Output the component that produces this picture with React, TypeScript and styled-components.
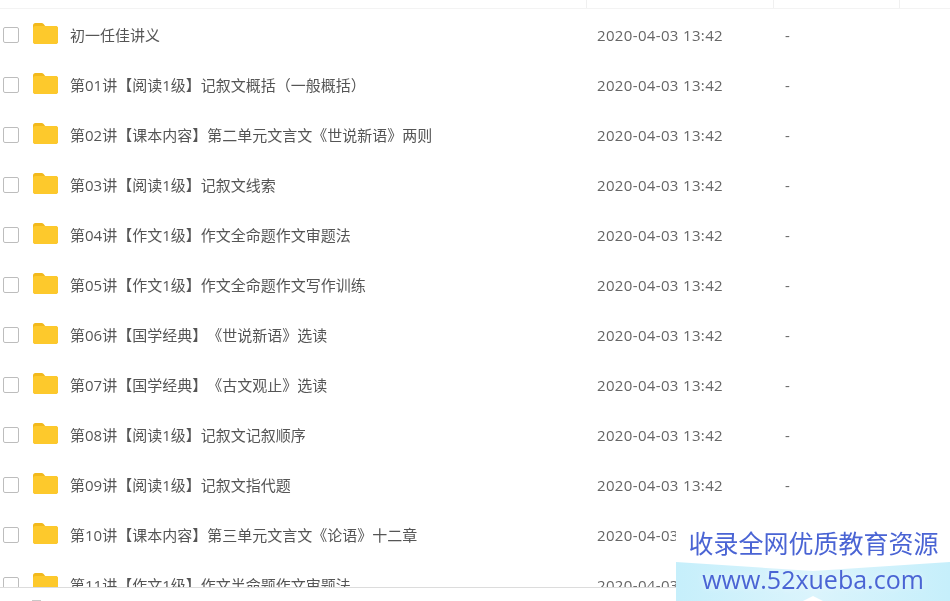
import React, { FC } from 'react';
import styled, { createGlobalStyle } from 'styled-components';

const GlobalStyle = createGlobalStyle`
  html, body {
    margin: 0;
    padding: 0;
    background: #fff;
    overflow: hidden;
  }
`;

const Page = styled.div`
  position: relative;
  width: 950px;
  height: 601px;
  overflow: hidden;
  background: #fff;
  font-family: 'Open Sans', 'Noto Sans CJK SC', sans-serif;
  text-spacing-trim: space-all;
`;

const Viewport = styled.div`
  height: 587px;
  overflow: hidden;
  border-bottom: 1px solid #dcdcdc;
  filter: blur(0.35px);
`;

const HeaderRow = styled.div`
  display: grid;
  grid-template-columns: 587px 187px 126px 50px;
  height: 9px;
  margin-bottom: 1px;
  border-bottom: 1px solid #f3f3f3;
  box-sizing: border-box;
`;

const HeaderCell = styled.div`
  border-right: 1px solid #f0f0f0;
  &:last-child {
    border-right: 0;
  }
`;

const Row = styled.div`
  display: flex;
  align-items: center;
  height: 50px;
  flex-shrink: 0;
`;

const CheckBox = styled.span`
  display: block;
  width: 16px;
  height: 16px;
  margin-left: 3px;
  border: 1px solid #bdbdbd;
  border-radius: 2px;
  box-sizing: border-box;
`;

const FolderIcon = styled.svg`
  display: block;
  width: 26px;
  height: 22px;
  margin-left: 13px;
  margin-top: -4px;
`;

const Name = styled.span`
  width: 527px;
  margin-left: 12px;
  font-size: 15px;
  line-height: 20px;
  color: #555;
  white-space: nowrap;
`;

const DateText = styled.span`
  width: 188px;
  font-size: 15px;
  line-height: 20px;
  letter-spacing: 0.35px;
  color: #666;
`;

const Size = styled.span`
  font-size: 15px;
  line-height: 20px;
  color: #666;
`;

const NextRowPeek = styled.div`
  position: absolute;
  left: 32px;
  bottom: 0;
  width: 9px;
  height: 1px;
  background: #c8c8c8;
`;

const Watermark = styled.div`
  position: absolute;
  right: 0;
  bottom: 0;
  width: 274px;
  height: 76px;
  background: #fff;
`;

const WatermarkBand = styled.svg`
  position: absolute;
  left: 0;
  bottom: 0;
  width: 274px;
  height: 39px;
`;

const WatermarkText = styled.div`
  position: relative;
  display: flex;
  flex-direction: column;
  align-items: center;
  color: #4a64d4;
  white-space: nowrap;
  filter: blur(0.3px);
`;

const WatermarkTitle = styled.div`
  font-size: 25px;
  line-height: 36px;
  margin-left: 1px;
`;

const WatermarkUrl = styled.div`
  font-size: 25px;
  line-height: 36px;
  text-shadow: 0 0 6px rgba(255, 255, 255, 0.6);
`;

const names = [
  '初一任佳讲义',
  '第01讲【阅读1级】记叙文概括（一般概括）',
  '第02讲【课本内容】第二单元文言文《世说新语》两则',
  '第03讲【阅读1级】记叙文线索',
  '第04讲【作文1级】作文全命题作文审题法',
  '第05讲【作文1级】作文全命题作文写作训练',
  '第06讲【国学经典】《世说新语》选读',
  '第07讲【国学经典】《古文观止》选读',
  '第08讲【阅读1级】记叙文记叙顺序',
  '第09讲【阅读1级】记叙文指代题',
  '第10讲【课本内容】第三单元文言文《论语》十二章',
  '第11讲【作文1级】作文半命题作文审题法'
];

const Folder: FC = () => (
  <FolderIcon viewBox="0 0 26 22">
    <path
      fill="#f2b91c"
      d="M1 3.5C1 2.1 2 1 3.4 1h6.2c.7 0 1.3.3 1.8.8L13.2 4h10.4C25 4 26 5 26 6.4v13.2c0 1.3-1 2.4-2.4 2.4H3.4C2 22 1 20.9 1 19.6z"
    />
    <path fill="#fdc92c" d="M1 6.5C1 5.1 2 4 3.4 4h20.2C25 4 26 5 26 6.4v13.2c0 1.3-1 2.4-2.4 2.4H3.4C2 22 1 20.9 1 19.6z" />
  </FolderIcon>
);

const App: FC = () => (
  <Page>
    <GlobalStyle />
    <Viewport>
      <HeaderRow>
        <HeaderCell />
        <HeaderCell />
        <HeaderCell />
        <HeaderCell />
      </HeaderRow>
      {names.map(name => (
        <Row key={name}>
          <CheckBox />
          <Folder />
          <Name>{name}</Name>
          <DateText>2020-04-03 13:42</DateText>
          <Size>-</Size>
        </Row>
      ))}
    </Viewport>
    <NextRowPeek />
    <Watermark>
      <WatermarkBand viewBox="0 0 274 39" preserveAspectRatio="none">
        <defs>
          <linearGradient id="band" x1="0" y1="0" x2="1" y2="0">
            <stop offset="0" stopColor="#c6effb" />
            <stop offset="0.5" stopColor="#dbf4fc" />
            <stop offset="1" stopColor="#c6effb" />
          </linearGradient>
        </defs>
        <path fill="url(#band)" d="M0 0L137 9L274 0V39H147L137 34L127 39H0z" />
      </WatermarkBand>
      <WatermarkText>
        <WatermarkTitle>收录全网优质教育资源</WatermarkTitle>
        <WatermarkUrl>www.52xueba.com</WatermarkUrl>
      </WatermarkText>
    </Watermark>
  </Page>
);

export default App;
